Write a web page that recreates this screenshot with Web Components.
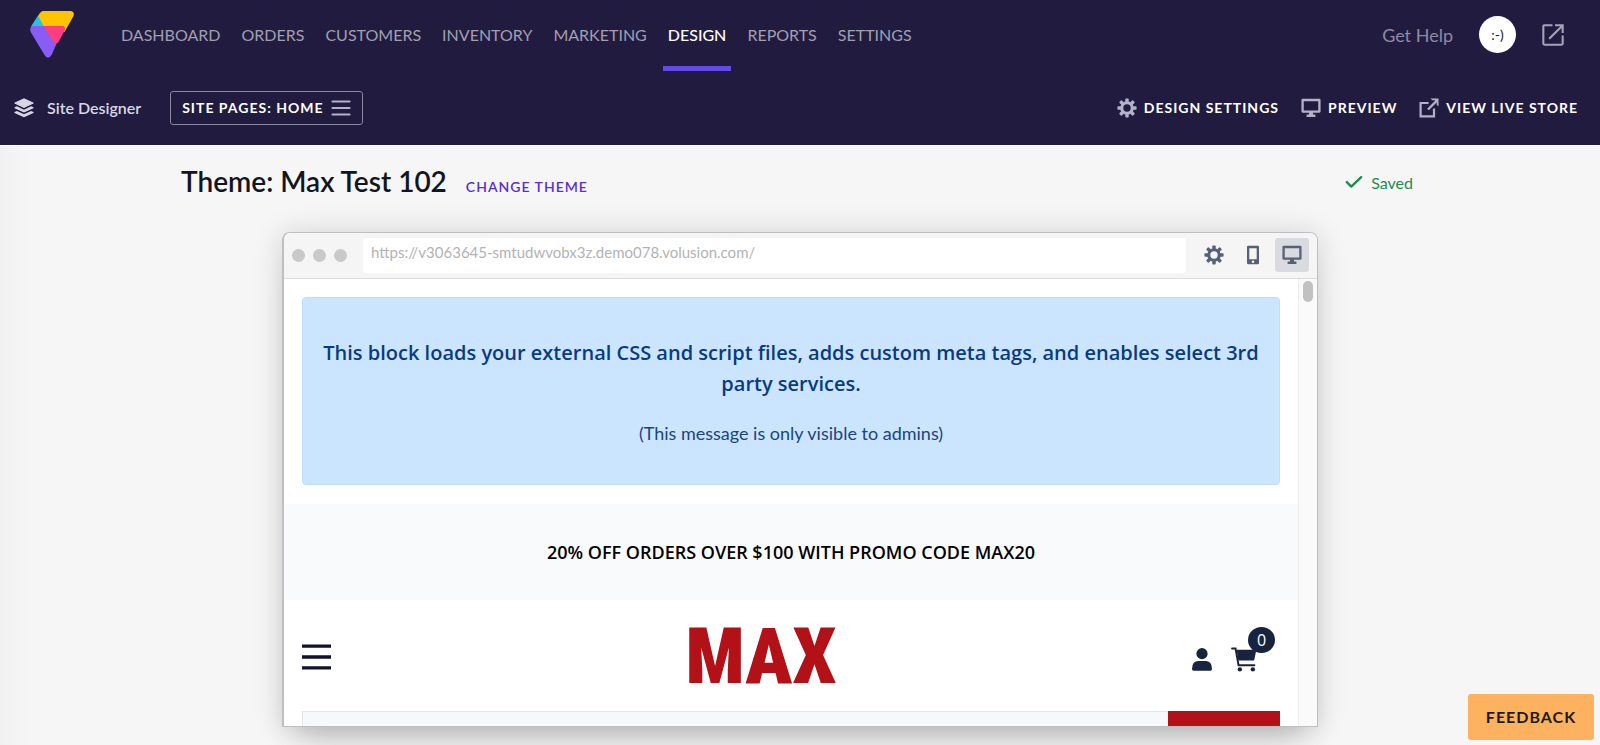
<!DOCTYPE html>
<html lang="en">
<head>
<meta charset="utf-8">
<title>Site Designer</title>
<style>
  body { margin: 0; font-family: Lato, "Open Sans", sans-serif; background: #f6f6f6; }
</style>
</head>
<body>
<designer-app></designer-app>
<script>
const define = (name, html) => {
  const template = document.createElement('template');
  template.innerHTML = html;
  customElements.define(name, class extends HTMLElement {
    constructor() {
      super();
      this.attachShadow({ mode: 'open' }).append(template.content.cloneNode(true));
    }
  });
};

const ICONS = {
  gear: '<g fill="currentColor"><path fill-rule="evenodd" d="M10 3.2a6.8 6.8 0 1 0 0 13.6 6.8 6.8 0 0 0 0-13.6zm0 3.1a3.700 3.700 0 1 1 0 7.400 3.700 3.700 0 0 1 0-7.400z"/>' +
    [0, 45, 90, 135, 180, 225, 270, 315].map(a => `<rect x="8.3" y="0.4" width="3.4" height="4" rx=".8" transform="rotate(${a} 10 10)"/>`).join('') + '</g>',
  monitor: '<path fill="none" stroke="currentColor" stroke-width="2.300" stroke-linejoin="round" d="M1.600 2h16.800v11.600H1.600z"/><path fill="currentColor" d="M8 14h4v2.6h2.4v2.400H5.6v-2.400H8z"/>',
  phone: '<path fill="currentColor" fill-rule="evenodd" d="M5.2.8h9.6q1.2 0 1.2 1.2v16q0 1.2-1.2 1.2H5.2Q4 19.200 4 18V2Q4 .8 5.200 .8zM6.300 3.200v11h7.400v-11zM10 15.500a1.300 1.300 0 1 0 0 2.600 1.300 1.300 0 0 0 0-2.600z"/>',
  external: '<path fill="none" stroke="currentColor" stroke-width="2.200" d="M9.500 5H1.600v13.400h13.400V10.500"/><path fill="none" stroke="currentColor" stroke-width="2.400" d="M9 11.500l8.500-8.500"/><path fill="currentColor" d="M11.500 .5h8v8l-1.800-1.800V4.300l-2-2h-2.400z"/>',
  open: '<path fill="none" stroke="currentColor" stroke-width="1.900" d="M9.500 1.200H2.200q-1 0-1 1v15.600q0 1 1 1h15.600q1 0 1-1V10.500M11.800 1.200h7v7M18.500 1.500L6.500 13.500"/>',
  layers: '<g fill="currentColor"><path d="M10 .8l9.300 4.300-9.300 4.400L.7 5.100z" stroke="currentColor" stroke-linejoin="round"/><path d="M.6 9.300l2.300-1L10 11.700l7.100-3.400 2.300 1q.5.500 0 .9L10 14.600.6 10.200q-.5-.4 0-.9zM.6 14l2.300-1.100L10 16.200l7.100-3.300 2.300 1.100q.5.500 0 .9L10 19.300.6 14.900q-.5-.4 0-.9z"/></g>',
  bars: '<path stroke="currentColor" stroke-width="2.200" stroke-linecap="round" d="M1.500 3.500h17M1.500 10h17M1.500 16.500h17"/>',
  menu: '<path stroke="currentColor" stroke-width="2.200" d="M0 2.800h20M0 10h20M0 17.200h20"/>',
  check: '<path fill="none" stroke="currentColor" stroke-width="2.600" stroke-linecap="round" stroke-linejoin="round" d="M2 9l5 5L18 3.500"/>',
  user: '<g fill="currentColor"><ellipse cx="10" cy="4.900" rx="5.600" ry="4.900"/><path d="M1.500 19.800q-1.500 0-1.500-1.500Q0 11.400 6.500 11.400h7q6.500 0 6.500 6.900 0 1.500-1.500 1.500z"/></g>',
  cart: '<path fill="none" stroke="currentColor" stroke-width="1.500" stroke-linecap="round" d="M.8 1.200h2.700L5.800 14.600H18"/><path fill="currentColor" d="M4.300 2.200H19.500l-1.700 8.600H5.700z"/><circle cx="6.800" cy="17.900" r="1.700" fill="currentColor"/><circle cx="16.800" cy="17.900" r="1.700" fill="currentColor"/>'
};
customElements.define('ui-icon', class extends HTMLElement {
  constructor() { super(); this.attachShadow({ mode: 'open' }); }
  connectedCallback() {
    this.shadowRoot.innerHTML = `<style>:host{display:inline-block;width:20px;height:20px;flex:none}svg{display:block;width:100%;height:100%}</style>
      <svg viewBox="0 0 20 20" preserveAspectRatio="none" aria-hidden="true">${ICONS[this.getAttribute('name')]}</svg>`;
  }
});

define('brand-logo', `
  <style>:host{display:block;width:44px;height:48px} svg{display:block}</style>
  <svg width="44" height="48" viewBox="0 0 44 48" role="img" aria-label="Volusion">
    <path fill="#ffc400" d="M12.500 0H41q4 1 2.500 5L34.500 21 8 14 8 5Q10 1 12.500 0z"/>
    <path fill="#26c6da" d="M8 4.500L1 15.500H14z"/>
    <path fill="#8a5cf6" d="M1.500 15H14L26.500 33 21.500 44q-3.500 5.500-7 0L1 21.500Q-.8 18 1.500 15z"/>
    <path fill="#ff3d7f" d="M13.500 15H33q3 1 2 4L28.500 31q-2.500 3-5 0z"/>
  </svg>`);

define('nav-link', `
  <style>
    :host{display:block}
    a{display:flex;align-items:center;box-sizing:border-box;height:71px;padding:0 5px 2px;border:solid transparent;border-width:5px 0;
      color:#a19fb1;font-size:16px;line-height:20px;text-decoration:none;white-space:nowrap}
    :host([active]) a{color:#fff;font-weight:500;border-bottom-color:#654be6}
  </style>
  <a href="#"><slot></slot></a>`);

define('tool-link', `
  <style>
    :host{display:block}
    a{display:flex;align-items:center;gap:7px;color:#fff;font-size:14px;line-height:20px;font-weight:700;letter-spacing:1px;text-decoration:none;white-space:nowrap}
    ::slotted(ui-icon){color:#b4b1cc}
  </style>
  <a href="#"><slot name="icon"></slot><slot></slot></a>`);

define('top-header', `
  <style>
    :host{display:block;background:#211c3f;flex:none}
    .row{display:flex;align-items:center}
    .main{height:72px;align-items:flex-start;padding:0 36px 0 30px}
    brand-logo{margin-top:11px}
    nav{display:flex;gap:11px;margin-left:42px;flex:1}
    .account{display:flex;align-items:center;height:69px;gap:26px;color:#8d8aa3}
    .account a{color:inherit;font-size:18px;line-height:24px;text-decoration:none;display:block}
    .avatar{width:37px;height:37px;padding:0;border:0;border-radius:50%;background:#fff;color:#222;font:14px/20px Lato,sans-serif}
    .account ui-icon{display:block;width:22px;height:22px;color:#a5a2ba}
    .tools{box-sizing:border-box;height:73px;padding:0 22px 2px 14px}
    .title{display:flex;align-items:center;gap:13px;color:#d9d7e6;font-size:16px;line-height:20px;font-weight:600}
    .pages{display:flex;align-items:center;gap:7px;height:34px;margin-left:29px;padding:0 11px;border:1px solid #8a87a0;border-radius:3px;background:none;
      color:#fff;font:700 14px/20px Lato,sans-serif;letter-spacing:1px}
    .pages ui-icon{color:#b4b1cc}
    .links{display:flex;gap:22px;margin-left:auto}
  </style>
  <header>
    <div class="row main">
      <brand-logo></brand-logo>
      <nav>
        <nav-link>DASHBOARD</nav-link><nav-link>ORDERS</nav-link><nav-link>CUSTOMERS</nav-link><nav-link>INVENTORY</nav-link>
        <nav-link>MARKETING</nav-link><nav-link active>DESIGN</nav-link><nav-link>REPORTS</nav-link><nav-link>SETTINGS</nav-link>
      </nav>
      <div class="account">
        <a href="#">Get Help</a>
        <button class="avatar">:-)</button>
        <a href="#" aria-label="Open store"><ui-icon name="open"></ui-icon></a>
      </div>
    </div>
    <div class="row tools">
      <div class="title"><ui-icon name="layers"></ui-icon><span>Site Designer</span></div>
      <button class="pages">SITE PAGES: HOME <ui-icon name="bars"></ui-icon></button>
      <div class="links">
        <tool-link><ui-icon slot="icon" name="gear"></ui-icon>DESIGN SETTINGS</tool-link>
        <tool-link><ui-icon slot="icon" name="monitor"></ui-icon>PREVIEW</tool-link>
        <tool-link><ui-icon slot="icon" name="external"></ui-icon>VIEW LIVE STORE</tool-link>
      </div>
    </div>
  </header>`);

define('theme-bar', `
  <style>
    :host{display:flex;align-items:baseline;box-sizing:border-box;width:100%;max-width:1238px;height:86px;margin:0 auto;padding:17px 6px 0 0;flex:none}
    h1{margin:0;color:#12151f;font-size:28px;line-height:36px;font-weight:600}
    a{margin-left:19px;color:#5a2fd0;font-size:14px;line-height:20px;font-weight:600;letter-spacing:1px;text-decoration:none}
    .saved{display:flex;align-items:center;gap:8px;margin-left:auto;color:#1c8d4e;font-size:16px;line-height:20px}
    ui-icon{width:18px;height:18px}
  </style>
  <h1>Theme: Max Test 102</h1>
  <a href="#">CHANGE THEME</a>
  <span class="saved"><ui-icon name="check"></ui-icon>Saved</span>`);

define('browser-frame', `
  <style>
    :host{display:flex;flex-direction:column;box-sizing:border-box;width:100%;max-width:1036px;min-height:0;flex:1;margin:0 auto;
      border:solid #bfbfc1;border-width:1px 1px 1px 2px;border-radius:8px 8px 0 0;background:#fff;overflow:hidden;
      box-shadow:0 2px 30px rgba(0,0,0,.16),0 24px 30px -16px rgba(0,0,0,.2)}
    .bar{display:flex;align-items:center;height:44px;flex:none;padding:0 8px 1px;background:#f5f5f5;border-bottom:1px solid #dcdcdc}
    .dots{display:flex;gap:8px;margin-right:16px}
    .dots i{width:13px;height:13px;border-radius:50%;background:#c9c9c9}
    input{flex:1;min-width:0;box-sizing:border-box;height:35px;padding:0 8px 6px;border:0;border-radius:3px;background:#fff;color:#b3b3b3;font:15px/20px Lato,sans-serif}
    .modes{display:flex;gap:5px;margin-left:11px}
    button{display:grid;place-items:center;width:34px;height:34px;padding:0;border:0;border-radius:3px;background:none;color:#566176}
    button.on{background:#d9dbe0}
    .view{display:flex;flex:1;min-height:0;overflow:hidden}
    .page{flex:1;min-width:0}
    .scroll{width:18px;border-left:1px solid #ececec;background:#fafafa}
    .scroll i{display:block;width:10px;height:21px;margin:2px auto;border-radius:5px;background:#c1c1c1}
  </style>
  <div class="bar">
    <div class="dots"><i></i><i></i><i></i></div>
    <input type="text" aria-label="Store address" value="https://v3063645-smtudwvobx3z.demo078.volusion.com/">
    <div class="modes">
      <button aria-label="Settings"><ui-icon name="gear"></ui-icon></button>
      <button aria-label="Phone view"><ui-icon name="phone"></ui-icon></button>
      <button aria-label="Desktop view" class="on"><ui-icon name="monitor"></ui-icon></button>
    </div>
  </div>
  <div class="view"><div class="page"><slot></slot></div><div class="scroll"><i></i></div></div>`);

define('store-page', `
  <style>
    :host{display:block;color:#000;font-family:"Open Sans",sans-serif}
    .alert{box-sizing:border-box;height:188px;margin:18px 18px 19px;padding:39px 18px 0;border:1px solid #c0dcfb;border-radius:4px;background:#cce5ff;color:#0a3a80;text-align:center}
    .alert h2{margin:0 0 21px;font-size:20px;line-height:31px;font-weight:600}
    .alert p{margin:0;font:18px/27px Lato,sans-serif;color:#1a4480}
    .promo{display:grid;place-items:center;height:96px;background:#f9fafc;font-size:18px;line-height:27px;font-weight:600}
    .head{display:grid;box-sizing:border-box;grid-template-columns:1fr auto 1fr;align-items:center;height:111px;padding:2px 18px 0}
    button{display:block;padding:0;border:0;background:none;color:#18233f}
    .menu ui-icon{display:block;width:29px;height:30px;color:#12122e}
    .logo{margin-right:60px;color:#b31118;font:900 78px/100px "Roboto Condensed","Open Sans Condensed","Noto Sans ExtraCondensed","Noto Sans Condensed","Liberation Sans",sans-serif;text-decoration:none}
    .acts{display:flex;justify-content:flex-end;align-items:center;gap:19px;padding:6px 23px 0 0}
    .user ui-icon{display:block;width:20px;height:23px}
    .cart{position:relative}
    .cart ui-icon{display:block;width:26px;height:25px}
    .badge{position:absolute;left:17px;top:-20px;width:27px;height:26px;border-radius:50%;background:#18233f;color:#fff;font:16px/26px "Open Sans",sans-serif;text-align:center}
    .search{display:flex;height:48px;margin:0 18px}
    .search input{flex:1;min-width:0;border:1px solid #e3e5e8;border-right:0;background:#f7f8fb}
    .search button{width:112px;background:#b31118}
  </style>
  <section class="alert">
    <h2>This block loads your external CSS and script files, adds custom meta tags, and enables select 3rd party services.</h2>
    <p>(This message is only visible to admins)</p>
  </section>
  <div class="promo">20% OFF ORDERS OVER $100 WITH PROMO CODE MAX20</div>
  <div class="head">
    <button class="menu" aria-label="Menu"><ui-icon name="menu"></ui-icon></button>
    <a class="logo" href="#">MAX</a>
    <div class="acts">
      <button class="user" aria-label="Account"><ui-icon name="user"></ui-icon></button>
      <button class="cart" aria-label="Cart"><ui-icon name="cart"></ui-icon><span class="badge">0</span></button>
    </div>
  </div>
  <div class="search"><input type="search" aria-label="Search"><button aria-label="Search"></button></div>`);

define('designer-app', `
  <style>
    :host{display:flex;flex-direction:column;height:100vh;overflow:hidden}
    main{display:flex;flex-direction:column;flex:1;min-height:0;box-sizing:border-box;padding-bottom:18px;border-top:1px solid #fff;
      background:linear-gradient(90deg,#f0f0f0,#f6f6f6 28px)}
    .feedback{position:fixed;right:6px;bottom:5px;width:126px;height:46px;padding:0;border:0;border-radius:3px;background:#fcb25f;color:#1d1a1a;
      font:700 16px/20px Lato,sans-serif;letter-spacing:1px}
  </style>
  <top-header></top-header>
  <main>
    <theme-bar></theme-bar>
    <browser-frame><store-page></store-page></browser-frame>
  </main>
  <button class="feedback">FEEDBACK</button>`);
</script>
</body>
</html>
